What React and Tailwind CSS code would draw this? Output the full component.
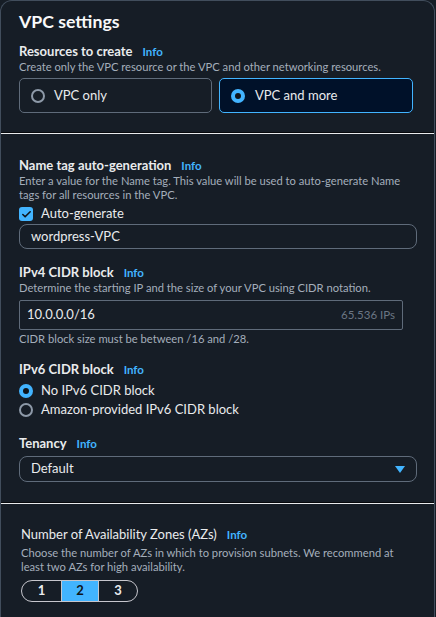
import { Check } from "lucide-react";

const font = { fontFamily: 'Lato, "Open Sans", Arial, sans-serif' };

function Info() {
  return <span className="ml-2.5 text-[11.5px] leading-[18px] font-bold text-[#42b4ff]">Info</span>;
}

function Label({ children, bold = true }) {
  return (
    <div className="flex h-[18px] items-baseline">
      <span className={`text-[13px] leading-[18px] text-[#e9ebed] ${bold ? "font-bold" : ""}`}>{children}</span>
      <Info />
    </div>
  );
}

function Radio({ checked }) {
  return checked ? (
    <span className="flex h-[14px] w-[14px] shrink-0 items-center justify-center rounded-full bg-[#42b4ff]">
      <span className="h-[6px] w-[6px] rounded-full bg-[#0f141a]" />
    </span>
  ) : (
    <span className="h-[14px] w-[14px] shrink-0 rounded-full border-2 border-[#8d99a8]" />
  );
}

function Divider() {
  return (
    <div>
      <div className="h-px bg-[#06080b]" />
      <div className="h-px bg-[#e9ebed]" />
    </div>
  );
}

export default function App() {
  return (
    <div className="h-[617px] w-[436px] overflow-hidden bg-[#161d26] text-[#d1d5db]" style={font}>
      <div className="w-[435px] rounded-t-[12px] border-x border-t border-[#414d5c] bg-[#161d26]">
        {/* Top section */}
        <div className="px-[18px] pt-[8px] pb-[19px]">
          <h1 className="h-[26px] text-[17.7px] font-bold leading-[26px] text-[#f9f9fa]">VPC settings</h1>
          <div className="mt-[7px]">
            <Label>Resources to create</Label>
          </div>
          <p className="text-[11.2px] leading-[14px] text-[#a4aebb]">
            Create only the VPC resource or the VPC and other networking resources.
          </p>
          <div className="mt-[4px] flex gap-[7px]">
            <div className="flex h-[35px] w-[193px] items-center gap-[9px] rounded-[5px] border border-[#5f6b7a] px-[11px]">
              <Radio />
              <span className="text-[13px] text-[#e9ebed]">VPC only</span>
            </div>
            <div className="flex h-[35px] w-[194px] items-center gap-[10px] rounded-[5px] border border-[#42b4ff] bg-[#001129] px-[11px]">
              <Radio checked />
              <span className="text-[13px] text-[#e9ebed]">VPC and more</span>
            </div>
          </div>
        </div>

        <Divider />

        {/* Middle section */}
        <div className="px-[18px] pt-[22px] pb-[20px]">
          <Label>Name tag auto-generation</Label>
          <p className="text-[11.2px] leading-[14px] text-[#a4aebb]">
            Enter a value for the Name tag. This value will be used to auto-generate Name tags for all resources in the VPC.
          </p>
          <div className="mt-[3px] flex h-[18px] items-center gap-[8px]">
            <span className="flex h-[14px] w-[14px] items-center justify-center rounded-[3px] bg-[#42b4ff]">
              <Check className="h-[11px] w-[11px] text-[#0f141a]" strokeWidth={3.5} />
            </span>
            <span className="text-[13px] text-[#e9ebed]">Auto-generate</span>
          </div>
          <div className="mt-[1px] flex h-[25px] w-[398px] items-center rounded-[8px] border border-[#5f6b7a] px-[11px] text-[13px] text-[#e9ebed]">
            wordpress-VPC
          </div>

          <div className="mt-[14px]">
            <Label>IPv4 CIDR block</Label>
          </div>
          <p className="text-[11.2px] leading-[14px] text-[#a4aebb]">
            Determine the starting IP and the size of your VPC using CIDR notation.
          </p>
          <div className="mt-[5px] flex h-[30px] w-[384px] items-center justify-between rounded-[2px] border border-[#5f6b7a] px-[7px]">
            <span className="text-[13px] text-[#e9ebed]">10.0.0.0/16</span>
            <span className="text-[11.5px] text-[#6b7684]">65.536 IPs</span>
          </div>
          <p className="mt-[2px] text-[11.2px] leading-[14px] text-[#a4aebb]">
            CIDR block size must be between /16 and /28.
          </p>

          <div className="mt-[14px]">
            <Label>IPv6 CIDR block</Label>
          </div>
          <div className="mt-[4px] flex flex-col gap-[1px]">
            <div className="flex h-[18px] items-center gap-[8px]">
              <Radio checked />
              <span className="text-[13px] text-[#e9ebed]">No IPv6 CIDR block</span>
            </div>
            <div className="flex h-[18px] items-center gap-[8px]">
              <Radio />
              <span className="text-[13px] text-[#e9ebed]">Amazon-provided IPv6 CIDR block</span>
            </div>
          </div>

          <div className="mt-[15px]">
            <Label>Tenancy</Label>
          </div>
          <div className="mt-[4px] flex h-[26px] w-[398px] items-center justify-between rounded-[8px] border border-[#5f6b7a] px-[11px]">
            <span className="text-[13px] text-[#e9ebed]">Default</span>
            <svg width="10" height="7" viewBox="0 0 10 7">
              <path d="M0 0h10L5 7z" fill="#42b4ff" />
            </svg>
          </div>
        </div>

        <Divider />

        {/* Bottom section */}
        <div className="px-[20px] pt-[21px]">
          <Label bold={false}>Number of Availability Zones (AZs)</Label>
          <p className="mt-[3px] text-[11.2px] leading-[14px] text-[#a4aebb]">
            Choose the number of AZs in which to provision subnets. We recommend at least two AZs for high availability.
          </p>
          <div className="mt-[6px] flex h-[22px] w-[117px] overflow-hidden rounded-full border border-[#c6c6cd] text-[13px] font-bold">
            <span className="flex w-[39px] items-center justify-center text-[#e9ebed]">1</span>
            <span className="flex w-[38px] items-center justify-center border-x border-[#c6c6cd] bg-[#42b4ff] text-[#0f141a]">2</span>
            <span className="flex w-[38px] items-center justify-center text-[#e9ebed]">3</span>
          </div>
          <div className="mt-[12px] flex items-center gap-[6px] text-[13px] font-bold leading-[18px] text-[#e9ebed]">
            <span className="text-[10px]">▶</span>
            <span>Customize AZs</span>
          </div>
        </div>
      </div>
    </div>
  );
}
